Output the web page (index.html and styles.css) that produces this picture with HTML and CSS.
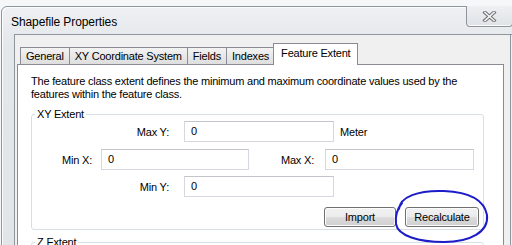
FILE: index.html
```html
<!DOCTYPE html>
<html>
<head>
<meta charset="utf-8">
<link rel="stylesheet" href="styles.css">
</head>
<body>
<div class="window">
  <div class="titlebar">
    <span class="title">Shapefile Properties</span>
    <div class="close">
      <svg width="15" height="11" viewBox="0 0 15 11">
        <path d="M3 1.5 L12 9.5 M12 1.5 L3 9.5" stroke="#707070" stroke-width="3.6" stroke-linecap="square" fill="none"/>
        <path d="M3 1.5 L12 9.5 M12 1.5 L3 9.5" stroke="#f4f4f4" stroke-width="1.6" stroke-linecap="square" fill="none"/>
      </svg>
    </div>
  </div>
  <div class="client">
    <div class="tabs">
      <div class="tab">General</div>
      <div class="tab">XY Coordinate System</div>
      <div class="tab">Fields</div>
      <div class="tab">Indexes</div>
      <div class="tab active">Feature Extent</div>
    </div>
    <div class="panel">
      <p class="desc">The feature class extent defines the minimum and maximum coordinate values used by the features within the feature class.</p>
      <fieldset class="group">
        <legend>XY Extent</legend>
        <div class="row row-center">
          <span class="lbl lbl-y">Max Y:</span>
          <div class="input">0</div>
          <span class="unit">Meter</span>
        </div>
        <div class="row row-x">
          <span class="lbl lbl-minx">Min X:</span>
          <div class="input wide">0</div>
          <span class="lbl lbl-maxx">Max X:</span>
          <div class="input wide2">0</div>
        </div>
        <div class="row row-center row-miny">
          <span class="lbl lbl-y">Min Y:</span>
          <div class="input">0</div>
        </div>
        <div class="buttons">
          <button class="btn btn-import">Import</button>
          <button class="btn btn-recalc">Recalculate</button>
        </div>
      </fieldset>
      <fieldset class="group group-z">
        <legend>Z Extent</legend>
      </fieldset>
    </div>
  </div>
</div>
<svg class="annotation" width="512" height="245" viewBox="0 0 512 245">
  <path d="M399 209 C400 197, 418 190, 444 191 C468 192, 484 199, 487 215 C489 232, 470 242, 444 242 C419 242, 398 236, 396 224 C395 215, 397 209, 402 203" stroke="#1c1cc8" stroke-width="2" fill="none" stroke-linecap="round"/>
</svg>
</body>
</html>
```

FILE: styles.css
```css
html, body {
  margin: 0;
  padding: 0;
}
body {
  width: 512px;
  height: 245px;
  overflow: hidden;
  background: #f6f7f8;
  font-family: "Liberation Sans", Arial, sans-serif;
  font-size: 11px;
  letter-spacing: -0.2px;
  color: #000;
  position: relative;
}
.window {
  margin-top: 6px;
  margin-left: 1px;
  width: 520px;
  height: 260px;
  border: 1px solid #8d959e;
  border-radius: 6px 6px 0 0;
  background: linear-gradient(#eef0f2, #e4e7ea 40px, #e2e5e8);
  box-sizing: border-box;
  box-shadow: inset 1px 1px 0 #fbfcfd;
}
.titlebar {
  height: 27px;
  display: flex;
  align-items: center;
  position: relative;
  padding-left: 9px;
}
.title {
  font-size: 12px;
  letter-spacing: -0.1px;
  margin-top: 2px;
  color: #000;
}
.close {
  position: absolute;
  top: -1px;
  left: 464px;
  width: 45px;
  height: 20px;
  border: 1px solid #8f959c;
  border-top: none;
  border-radius: 0 0 4px 4px;
  background: linear-gradient(#eef0f2, #dfe3e7);
  display: flex;
  align-items: center;
  justify-content: center;
  box-shadow: inset 0 -1px 0 #fafbfc;
}
.client {
  margin-left: 12px;
  width: 600px;
  height: 300px;
  border: 1px solid #8d959e;
  background: #f0f0f0;
  padding: 8px 0 0 1px;
  box-sizing: border-box;
  position: relative;
}
.client::after {
  content: "";
  position: absolute;
  left: 495px;
  top: -1px;
  width: 1px;
  height: 300px;
  background: #8d959e;
}
.tabs {
  display: flex;
  align-items: flex-end;
  padding-left: 4px;
  height: 21px;
  position: relative;
  z-index: 1;
  width: 485px;
}
.tab {
  height: 17px;
  line-height: 17px;
  padding: 0 5px;
  border: 1px solid #898c95;
  border-bottom: none;
  margin-right: -1px;
  background: linear-gradient(#f3f3f3, #e8e8e8 50%, #dedede);
  color: #000;
  box-sizing: border-box;
}
.tab.active {
  line-height: 18px;
  padding: 0 7px 0 7px;
  margin-left: -1px;
  margin-bottom: -1px;
  height: 22px;
  background: #fff;
}
.panel {
  width: 487px;
  height: 200px;
  background: #fff;
  border: 1px solid #898c95;
  box-sizing: border-box;
  margin-left: 1px;
  padding: 10px 0 0 13px;
}
.desc {
  margin: 0;
  line-height: 13px;
  width: 445px;
}
.group {
  margin: 7px 0 0 0;
  width: 453px;
  border: 1px solid #d5dfe5;
  border-radius: 3px;
  padding: 0 0 2px 0;
  box-sizing: border-box;
}
.group legend {
  padding: 0 2px;
  margin-left: 3px;
  line-height: 13px;
}
.row {
  display: flex;
  align-items: center;
  height: 21px;
}
.row-center {
  padding-left: 87px;
}
.row-x {
  margin-top: 7px;
  padding-left: 19px;
}
.row-miny {
  margin-top: 6px;
}
.lbl {
  text-align: right;
  display: inline-block;
}
.lbl-y {
  width: 50px;
  margin-right: 15px;
}
.lbl-minx {
  width: 41px;
  margin-right: 9px;
}
.lbl-maxx {
  width: 65px;
  margin-right: 11px;
}
.input {
  width: 150px;
  height: 21px;
  border: 1px solid #d5d9df;
  border-top-color: #c2c6cc;
  box-sizing: border-box;
  padding-left: 6px;
  line-height: 19px;
  background: #fff;
}
.input.wide {
  width: 148px;
}
.input.wide2 {
  width: 149px;
}
.unit {
  margin-left: 6px;
}
.buttons {
  display: flex;
  justify-content: flex-end;
  margin-top: 10px;
  padding-right: 4px;
  gap: 9px;
}
.btn {
  font-family: "Liberation Sans", Arial, sans-serif;
  font-size: 11px;
  letter-spacing: -0.2px;
  height: 20px;
  border: 1px solid #707070;
  border-radius: 3px;
  background: linear-gradient(#f2f2f2, #ebebeb 50%, #dddddd 51%, #cfcfcf);
  box-shadow: inset 0 0 0 1px #fcfcfc;
  padding: 0;
  color: #000;
}
.btn-import {
  width: 72px;
}
.btn-recalc {
  width: 74px;
}
.group-z {
  margin-top: 6px;
  height: 40px;
}
.annotation {
  position: absolute;
  left: 0;
  top: 0;
  pointer-events: none;
}
```
